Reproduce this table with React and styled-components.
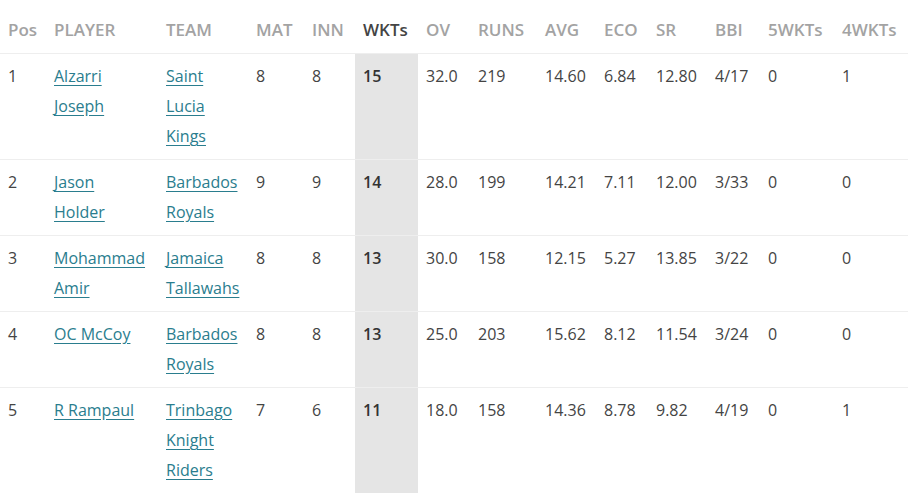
import React from 'react';
import styled, { createGlobalStyle } from 'styled-components';

const Global = createGlobalStyle`
  body {
    margin: 0;
    background: #fff;
    font-family: "Open Sans", "Noto Sans", sans-serif;
  }
`;

const Table = styled.table`
  width: 908px;
  table-layout: fixed;
  border-collapse: collapse;
  font-size: 16px;
  color: #444;
`;

const Th = styled.th`
  text-align: left;
  font-size: 17px;
  font-weight: 600;
  line-height: 30px;
  padding: 15px 0 8px 8px;
  color: ${(p) => (p.$active ? '#444' : '#a3a3a3')};
  border-bottom: 1px solid #eee;
  white-space: nowrap;
`;

const Row = styled.tr`
  border-bottom: 1px solid #eee;
`;

const Td = styled.td`
  vertical-align: top;
  line-height: 30px;
  padding: 7px ${(p) => (p.$wide ? 11 : 8)}px 8px 8px;
  background: ${(p) => (p.$active ? '#e5e5e5' : 'transparent')};
  font-weight: ${(p) => (p.$active ? 600 : 400)};
  color: ${(p) => (p.$active ? '#333' : '#444')};
`;

const Link = styled.a`
  color: #2a7d8e;
  text-decoration: underline;
  text-underline-offset: 3px;
`;

const columns = [
  ['Pos', 46],
  ['PLAYER', 112],
  ['TEAM', 90],
  ['MAT', 56],
  ['INN', 51],
  ['WKTs', 63],
  ['OV', 52],
  ['RUNS', 67],
  ['AVG', 59],
  ['ECO', 52],
  ['SR', 59],
  ['BBI', 53],
  ['5WKTs', 74],
  ['4WKTs', 74],
];

const rows = [
  ['1', 'Alzarri Joseph', 'Saint Lucia Kings', '8', '8', '15', '32.0', '219', '14.60', '6.84', '12.80', '4/17', '0', '1'],
  ['2', 'Jason Holder', 'Barbados Royals', '9', '9', '14', '28.0', '199', '14.21', '7.11', '12.00', '3/33', '0', '0'],
  ['3', 'Mohammad Amir', 'Jamaica Tallawahs', '8', '8', '13', '30.0', '158', '12.15', '5.27', '13.85', '3/22', '0', '0'],
  ['4', 'OC McCoy', 'Barbados Royals', '8', '8', '13', '25.0', '203', '15.62', '8.12', '11.54', '3/24', '0', '0'],
  ['5', 'R Rampaul', 'Trinbago Knight Riders', '7', '6', '11', '18.0', '158', '14.36', '8.78', '9.82', '4/19', '0', '1'],
];

export default function App() {
  return (
    <>
      <Global />
      <Table>
        <colgroup>
          {columns.map(([name, w]) => (
            <col key={name} style={{ width: w }} />
          ))}
        </colgroup>
        <thead>
          <tr>
            {columns.map(([name], i) => (
              <Th key={name} $active={i === 5}>{name}</Th>
            ))}
          </tr>
        </thead>
        <tbody>
          {rows.map((r) => (
            <Row key={r[0]}>
              {r.map((cell, i) => (
                <Td key={i} $active={i === 5} $wide={i === 1}>
                  {i === 1 || i === 2 ? <Link href="#">{cell}</Link> : cell}
                </Td>
              ))}
            </Row>
          ))}
        </tbody>
      </Table>
    </>
  );
}
